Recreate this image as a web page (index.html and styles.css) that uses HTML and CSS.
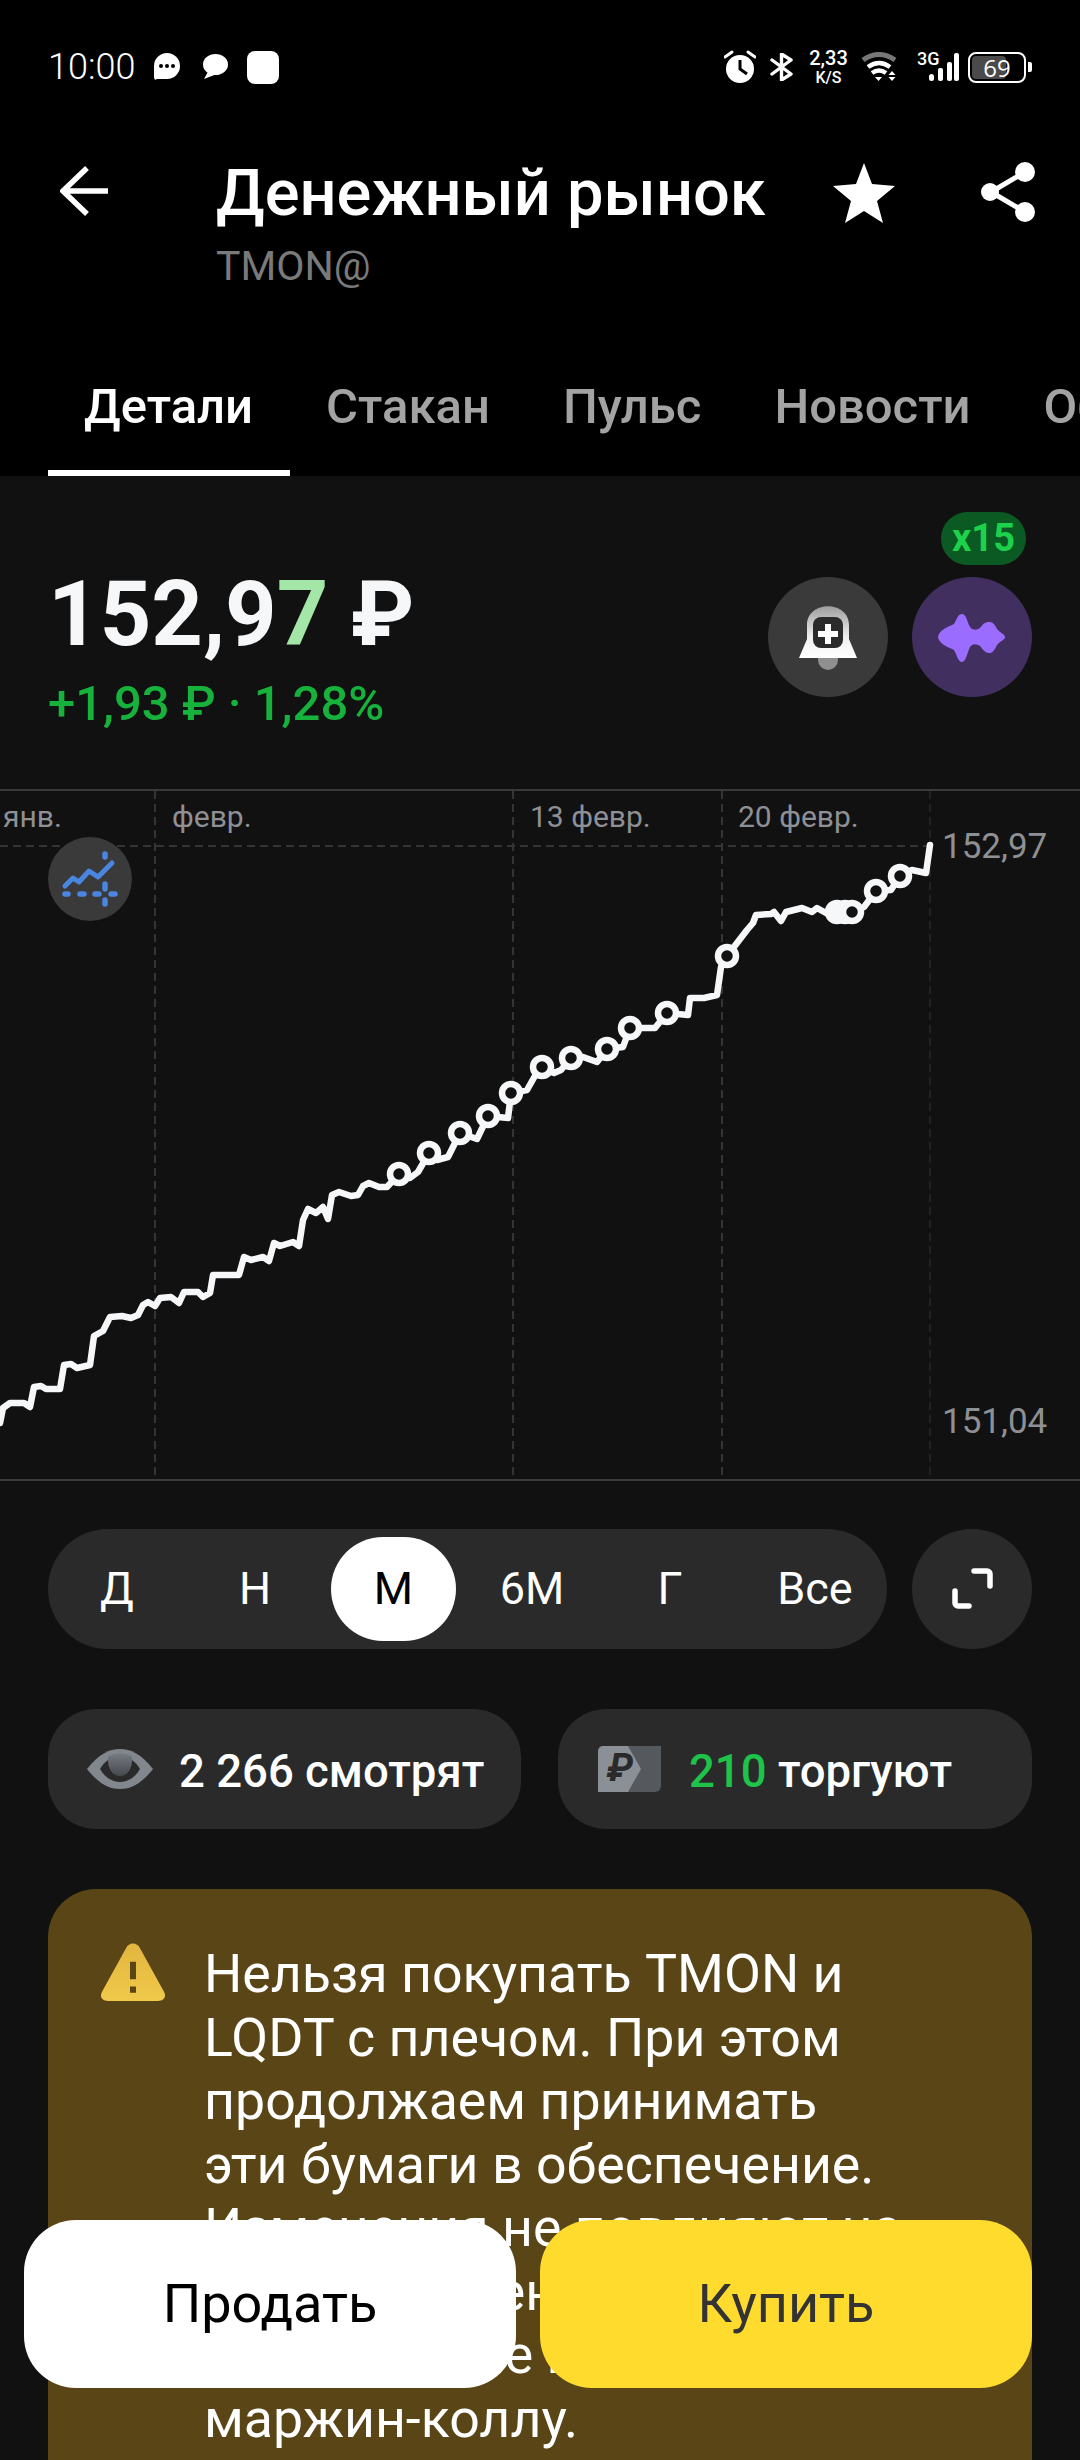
FILE: index.html
```html
<!DOCTYPE html>
<html lang="ru">

<head>
    <meta charset="UTF-8">
    <meta name="viewport" content="width=device-width, initial-scale=1.0">
    <title>Денежный рынок</title>
    <link rel="stylesheet" href="styles.css">
</head>

<body>
    <div class="page">
        <div class="top">
            <div class="status">
                <span class="status-time">10:00</span>
                <svg class="bubble-dots" viewBox="0 0 26 28"><path d="M13 0a13 13 0 0 1 0 26H3q-3 2-3-2V13A13 13 0 0 1 13 0z" fill="#fff"/><circle cx="7" cy="13" r="2"/><circle cx="13" cy="13" r="2"/><circle cx="19" cy="13" r="2"/></svg>
                <svg class="bubble-plain" viewBox="0 0 26 26"><ellipse cx="13.5" cy="10.5" rx="12.5" ry="10.5" fill="#fff"/><path d="M7 16L2 25L15 20z" fill="#fff"/></svg>
                <span class="status-square"></span>
                <div class="status-right">
                    <svg class="ic-alarm" viewBox="0 0 32 34"><circle cx="16" cy="19" r="14" fill="#fff"/><path d="M16 10v9l7 5" fill="none" stroke="#000" stroke-width="3"/><path d="M1 7l7-5M24 2l7 5" stroke="#fff" stroke-width="3" stroke-linecap="round"/></svg>
                    <svg class="ic-bt" viewBox="0 0 23 28"><path d="M2 7L21 21L11.5 27V1L21 7L2 21" fill="none" stroke="#fff" stroke-width="3.4" stroke-linejoin="round" stroke-linecap="round"/></svg>
                    <div class="speed"><span class="speed-val">2,33</span><span class="speed-unit">K/S</span></div>
                    <svg class="ic-wifi" viewBox="0 0 38 30"><path d="M2 8Q18 -3 34 8" fill="none" stroke="#777" stroke-width="5"/><path d="M7 15Q18 7 29 15" fill="none" stroke="#fff" stroke-width="4.5"/><path d="M11 21Q18 16 25 21" fill="none" stroke="#fff" stroke-width="4.5"/><path d="M14 25h7l-3.500 4z" fill="#fff"/><path d="M31 19l3.500 4h-7zM27.500 25h7l-3.500 4z" fill="#fff"/></svg>
                    <svg class="ic-signal" viewBox="0 0 42 30"><text class="signal-3g" x="0" y="13">3G</text><rect x="12" y="22" width="5" height="7" rx="2.500" fill="#fff"/><rect x="21" y="16" width="5" height="13" rx="2" fill="#fff"/><rect x="30" y="10" width="5" height="19" rx="2" fill="#fff"/><rect x="37" y="1" width="5" height="28" rx="2" fill="#fff"/></svg>
                    <div class="battery"><span class="battery-fill"></span><span class="battery-val">69</span></div>
                    <span class="battery-nub"></span>
                </div>
            </div>

            <div class="head">
                <svg class="ic-back" viewBox="0 0 48 50"><path d="M48 25H3M27 2L3 25L27 48" fill="none" stroke="#fff" stroke-width="5.500"/></svg>
                <div class="head-text">
                    <div class="title">Денежный рынок</div>
                    <div class="ticker">TMON@</div>
                </div>
                <svg class="ic-star" viewBox="0 0 62 60"><path d="M31 0L39 21L62 23L44 38L50 60L31 48L12 60L18 38L0 23L23 21z" fill="#fff"/></svg>
                <svg class="ic-share" viewBox="0 0 54 60"><path d="M44 10L10 30L44 50" fill="none" stroke="#fff" stroke-width="5"/><circle cx="9" cy="30" r="9" fill="#fff"/><circle cx="44" cy="10" r="10" fill="#fff"/><circle cx="44" cy="50" r="10" fill="#fff"/></svg>
            </div>

            <div class="tabs">
                <div class="tab active">Детали</div>
                <div class="tab">Стакан</div>
                <div class="tab">Пульс</div>
                <div class="tab">Новости</div>
                <div class="tab">Обзор</div>
            </div>
        </div>

        <div class="quote">
            <div>
                <div class="price">152,9<span class="price-last">7</span> ₽</div>
                <div class="change">+1,93 ₽ · 1,28%</div>
            </div>
            <div class="quote-actions">
                <div class="round-btn bell">
                    <svg viewBox="0 0 120 120">
                        <defs><linearGradient id="bellfill" x1="0" y1="0" x2="0" y2="1"><stop offset="0" stop-color="#9c9c9c"/><stop offset="0.6" stop-color="#f0f0f0"/><stop offset="1" stop-color="#fff"/></linearGradient></defs>
                        <path d="M50 80h20v3a10 10 0 0 1-20 0z" fill="#8f8f8f"/>
                        <path d="M31 81L39 62V48C39 23 81 23 81 48V62L89 81z" fill="url(#bellfill)"/>
                        <rect x="45" y="40" width="30" height="31" rx="8" fill="#2b2b2b"/>
                        <path d="M60 47V67M50 57H70" stroke="#fff" stroke-width="6"/>
                    </svg>
                </div>
                <div class="round-btn pulse">
                    <span class="badge">x15</span>
                    <svg viewBox="0 0 120 120"><path d="M26 60C27 53 36 50 42 47C45 42 46 37 50 37C54 37 55 44 58 50C61 54 66 53 69 50C72 45 75 45 78 45C81 45 83 48 85 52C88 56 93 57 93 60C93 63 88 64 85 68C83 72 81 76 78 76C75 76 72 75 69 70C66 67 61 66 58 70C55 76 54 85 50 85C46 85 45 78 42 73C36 70 27 67 26 60z" fill="#9a6cff"/></svg>
                </div>
            </div>
        </div>

        <div class="chart">
            <svg class="chart-svg" viewBox="0 791 1080 688">
                <g class="grid">
                    <path d="M0 846H930M155 791V1479M513 791V1479M722 791V1479"/>
                    <path class="grid-thin" d="M930 791V1479"/>
                </g>
                <text class="axis" x="3" y="827">янв.</text>
                <text class="axis" x="172" y="827">февр.</text>
                <text class="axis" x="530" y="827">13 февр.</text>
                <text class="axis" x="738" y="827">20 февр.</text>
                <text class="axis-price" x="942" y="858">152,97</text>
                <text class="axis-price" x="942" y="1433">151,04</text>
                <polyline class="line" points="0,1423 3,1408 10,1403 24,1403 30,1407 34,1387 41,1386 46,1389 60,1389 64,1365 71,1364 77,1368 90,1365 94,1336 103,1331 110,1317 122,1316 131,1318 138,1315 143,1305 148,1302 155,1306 160,1298 171,1297 179,1303 184,1292 198,1292 203,1297 210,1293 213,1275 239,1275 244,1257 251,1260 263,1257 269,1261 274,1243 280,1246 293,1242 299,1246 303,1220 308,1209 316,1213 323,1207 328,1219 332,1195 339,1192 351,1196 358,1195 363,1186 369,1183 379,1187 387,1187 399,1174 410,1178 418,1172 429,1153 437,1160 448,1157 460,1133 477,1139 488,1116 508,1118 511,1093 527,1090 540,1067 554,1073 561,1070 571,1058 583,1057 597,1062 607,1049 623,1047 630,1028 643,1028 655,1028 667,1013 688,1015 690,998 704,998 717,995 721,967 727,956 747,930 753,923 756,915 771,914 774,912 781,921 786,912 802,908 812,912 817,908 826,913 837,912 852,912 864,907 876,891 891,890 900,876 912,870 926,873 930,845"/>
                <g class="dots">
                    <circle cx="399" cy="1174" r="9"/>
                    <circle cx="429" cy="1153" r="9"/>
                    <circle cx="460" cy="1133" r="9"/>
                    <circle cx="488" cy="1116" r="9"/>
                    <circle cx="511" cy="1093" r="9"/>
                    <circle cx="542" cy="1067" r="9"/>
                    <circle cx="571" cy="1058" r="9"/>
                    <circle cx="607" cy="1049" r="9"/>
                    <circle cx="630" cy="1028" r="9"/>
                    <circle cx="667" cy="1013" r="9"/>
                    <circle cx="727" cy="956" r="9"/>
                    <circle class="dot-solid" cx="837" cy="912" r="9"/>
                    <circle class="dot-solid" cx="845" cy="912" r="9"/>
                    <circle cx="852" cy="912" r="9"/>
                    <circle cx="876" cy="891" r="9"/>
                    <circle cx="900" cy="876" r="9"/>
                </g>
            </svg>
            <div class="indicator-btn">
                <svg viewBox="0 0 84 84"><path d="M17 49L25 41L31 45L41 34L50 40L64 26" fill="none" stroke="#4a86e0" stroke-width="5" stroke-linecap="round" stroke-linejoin="round"/><path d="M57 17v3M57 47v5M57 63v4M17 57h3M32 57h4M47 57h4M63 57h4" stroke="#4a86e0" stroke-width="5.500" stroke-linecap="round"/></svg>
            </div>
        </div>

        <div class="range-row">
            <div class="range">
                <div class="range-item">Д</div>
                <div class="range-item">Н</div>
                <div class="range-item selected">М</div>
                <div class="range-item">6М</div>
                <div class="range-item">Г</div>
                <div class="range-item last">Все</div>
            </div>
            <div class="expand">
                <svg viewBox="0 0 120 120"><path d="M62 42H75a3 3 0 0 1 3 3V57M43 62V74a3 3 0 0 0 3 3H57" fill="none" stroke="#fff" stroke-width="5.500" stroke-linecap="round"/></svg>
            </div>
        </div>

        <div class="chips">
            <div class="chip">
                <svg class="ic-eye" viewBox="0 0 66 40">
                    <defs><linearGradient id="pupil" x1="0" y1="0" x2="0" y2="1"><stop offset="0" stop-color="#777c83"/><stop offset="1" stop-color="#45484d"/></linearGradient></defs>
                    <path d="M0 20C12 5 22 0 33 0C44 0 54 5 66 20C54 35 44 40 33 40C22 40 12 35 0 20z" fill="#82878e"/>
                    <path d="M13 20C18 11 26 7 33 7C40 7 48 11 53 20C48 29 40 33 33 33C26 33 18 29 13 20z" fill="#2a2a2b"/>
                    <path d="M21 8C26 3 40 3 45 8C46 20 40 27 33 27C26 27 20 20 21 8z" fill="url(#pupil)"/>
                </svg>
                <span class="chip-text">2 266 смотрят</span>
            </div>
            <div class="chip chip-trade">
                <svg class="ic-rub" viewBox="0 0 63 46">
                    <path d="M20 0H63V40a6 6 0 0 1-6 6H20z" fill="#55585d"/>
                    <path d="M5 0H30L43 23L30 46H0V5a5 5 0 0 1 5-5z" fill="#8b9097"/>
                    <text class="rub-mark" x="9" y="35">₽</text>
                </svg>
                <span class="chip-text"><span class="chip-green">210</span> торгуют</span>
            </div>
        </div>

        <div class="notice">
            <svg class="ic-warn" viewBox="0 0 66 58" preserveAspectRatio="none">
                <defs><linearGradient id="warn" x1="0" y1="0" x2="0" y2="1"><stop offset="0" stop-color="#e2b53f"/><stop offset="1" stop-color="#f0c94a"/></linearGradient></defs>
                <path d="M26 6C29 0 37 0 40 6L64 48C67 54 63 57 58 57H8C3 57 -1 54 2 48z" fill="url(#warn)"/>
                <path d="M33 19V36M33 43V49" stroke="#5a4516" stroke-width="6"/>
            </svg>
            <div class="notice-text">Нельзя покупать TMON и<br>LQDT с плечом. При этом<br>продолжаем принимать<br>эти бумаги в обеспечение.<br>Изменения не повлияют на<br>риск и уровень<br>маржи, но не приведут к<br>маржин-коллу.</div>
        </div>

        <div class="trade-bar">
            <div class="trade-btn sell">Продать</div>
            <div class="trade-btn buy">Купить</div>
        </div>
    </div>
</body>

</html>
```

FILE: styles.css
```css
* {
  box-sizing: border-box;
}

html,
body {
  margin: 0;
  padding: 0;
  background-color: #111112;
}

.page {
  position: relative;
  width: 1080px;
  height: 2460px;
  overflow: hidden;
  font-family: Roboto, "Noto Sans", sans-serif;
  color: #fff;
  background-color: #111112;
}

svg {
  display: block;
  flex-shrink: 0;
}

/* top black part */

.top {
  height: 476px;
  background-color: #000;
}

.status {
  display: flex;
  align-items: center;
  height: 134px;
  padding: 0 48px 0 48px;
}

.status-time {
  font-size: 36px;
  font-weight: 300;
  width: 106px;
}

.bubble-dots {
  width: 26px;
  height: 28px;
  margin-right: 22px;
}

.bubble-plain {
  width: 26px;
  height: 26px;
  margin-right: 19px;
}

.status-square {
  width: 32px;
  height: 33px;
  background-color: #fff;
  border-radius: 8px;
}

.status-right {
  display: flex;
  align-items: center;
  margin-left: auto;
}

.ic-alarm {
  width: 32px;
  height: 34px;
  margin-right: 14px;
}

.ic-bt {
  width: 23px;
  height: 28px;
  margin-right: 17px;
}

.speed {
  display: flex;
  flex-direction: column;
  align-items: center;
  width: 37px;
  margin-right: 14px;
  font-weight: 500;
}

.speed-val {
  font-size: 20px;
  line-height: 20px;
}

.speed-unit {
  font-size: 16px;
  line-height: 16px;
  margin-top: 2px;
}

.ic-wifi {
  width: 38px;
  height: 30px;
  margin-right: 18px;
}

.ic-signal {
  width: 42px;
  height: 30px;
  margin-right: 9px;
}

.signal-3g {
  font-size: 18px;
  font-weight: 500;
  fill: #fff;
}

.battery {
  position: relative;
  display: flex;
  align-items: center;
  justify-content: center;
  width: 58px;
  height: 31px;
  border: 2.5px solid #fff;
  border-radius: 8px;
  font-family: "Open Sans", sans-serif;
  font-size: 24px;
}

.battery-fill {
  position: absolute;
  left: 2px;
  top: 2px;
  bottom: 2px;
  width: 34px;
  background-color: #4a4a4a;
  border-radius: 4px;
}

.battery-val {
  position: relative;
}

.battery-nub {
  width: 4px;
  height: 10px;
  margin-left: 2px;
  background-color: #fff;
  border-radius: 0 2px 2px 0;
}

.head {
  display: flex;
  align-items: flex-start;
  height: 156px;
  padding-top: 21px;
}

.ic-back {
  width: 48px;
  height: 50px;
  margin: 11px 0 0 60px;
}

.head-text {
  margin-left: 108px;
  width: 617px;
}

.title {
  font-size: 65px;
  font-weight: 500;
  line-height: 76px;
  white-space: nowrap;
}

.ticker {
  margin-top: 11px;
  font-size: 41px;
  line-height: 48px;
  color: #7a7a7a;
}

.ic-star {
  width: 62px;
  height: 60px;
  margin-top: 8px;
}

.ic-share {
  width: 54px;
  height: 60px;
  margin: 7px 0 0 86px;
}

.tabs {
  display: flex;
  margin-top: 88px;
  padding-left: 48px;
}

.tab {
  flex-shrink: 0;
  padding: 0 37px 35px 36px;
  border-bottom: 6px solid transparent;
  font-size: 49px;
  font-weight: 500;
  line-height: 57px;
  color: #a3a3a3;
}

.tab.active {
  color: #fff;
  border-bottom-color: #fff;
}

/* price block */

.quote {
  display: flex;
  justify-content: space-between;
  height: 313px;
  padding: 86px 48px 0 48px;
}

.price {
  font-size: 90px;
  font-weight: 700;
  line-height: 105px;
  color: #f6f7f8;
}

.price-last {
  color: #a3e6a8;
}

.change {
  margin-top: 8px;
  font-size: 49px;
  font-weight: 500;
  line-height: 57px;
  color: #17b23c;
}

.quote-actions {
  display: flex;
  gap: 24px;
  margin-top: 15px;
}

.round-btn {
  position: relative;
  width: 120px;
  height: 120px;
  border-radius: 50%;
  background-color: #3a3a3b;
}

.round-btn.pulse {
  background-color: #41305f;
}

.badge {
  position: absolute;
  left: 29px;
  top: -65px;
  width: 85px;
  height: 53px;
  border-radius: 27px;
  background-color: #0b5a24;
  color: #1ed14b;
  font-size: 38px;
  font-weight: 700;
  line-height: 53px;
  text-align: center;
}

/* chart */

.chart {
  position: relative;
  height: 692px;
  border-top: 2px solid #3a3a3b;
  border-bottom: 2px solid #3a3a3b;
}

.chart-svg {
  width: 1080px;
  height: 688px;
}

.grid path {
  fill: none;
  stroke: #343435;
  stroke-width: 2;
  stroke-dasharray: 8 5;
}

.grid .grid-thin {
  stroke-width: 1;
}

.axis {
  font-size: 30px;
  fill: #8e9094;
}

.axis-price {
  font-size: 35px;
  fill: #8e9094;
}

.line {
  fill: none;
  stroke: #f6f7f8;
  stroke-width: 6.5;
  stroke-linejoin: round;
  stroke-linecap: round;
}

.dots circle {
  fill: #111112;
  stroke: #f6f7f8;
  stroke-width: 6.5;
}

.dots .dot-solid {
  fill: #f6f7f8;
}

.indicator-btn {
  position: absolute;
  left: 48px;
  top: 46px;
  width: 84px;
  height: 84px;
  border-radius: 50%;
  background-color: #3a3a3b;
}

/* period switch */

.range-row {
  display: flex;
  gap: 25px;
  margin: 48px 48px 0 48px;
}

.range {
  display: flex;
  align-items: center;
  flex: 1;
  height: 120px;
  border-radius: 60px;
  background-color: #2a2a2b;
}

.range-item {
  flex: none;
  width: 138px;
  height: 104px;
  border-radius: 52px;
  font-size: 45px;
  line-height: 104px;
  text-align: center;
}

.range-item.selected {
  width: 125px;
  margin: 0 7px;
  background-color: #fff;
  color: #000;
}

.range-item.last {
  margin-left: 7px;
}

.expand {
  width: 120px;
  height: 120px;
  border-radius: 50%;
  background-color: #2a2a2b;
}

.chips {
  display: flex;
  gap: 37px;
  margin: 60px 48px 0 48px;
}

.chip {
  display: flex;
  align-items: center;
  flex: 1;
  height: 120px;
  padding-left: 39px;
  border-radius: 48px;
  background-color: #2a2a2b;
}

.chip-trade {
  padding-left: 40px;
}

.ic-eye {
  width: 66px;
  height: 40px;
  margin-right: 26px;
}

.ic-rub {
  width: 63px;
  height: 46px;
  margin-right: 28px;
}

.rub-mark {
  font-size: 38px;
  font-weight: 700;
  font-style: italic;
  fill: #2a2a2b;
}

.chip-text {
  padding-top: 4px;
  font-size: 45.5px;
  font-weight: 500;
}

.chip-green {
  color: #1ec44a;
}

/* warning card */

.notice {
  display: flex;
  gap: 38px;
  height: 700px;
  margin: 60px 48px 0 48px;
  padding: 53px 40px 0 52px;
  border-radius: 48px;
  background-color: #5a4516;
}

.ic-warn {
  width: 66px;
  height: 60px;
}

.notice-text {
  font-size: 53.7px;
  line-height: 63.5px;
  white-space: nowrap;
}

/* buy and sell overlay */

.trade-bar {
  position: absolute;
  left: 24px;
  right: 48px;
  top: 2220px;
  display: flex;
  gap: 24px;
}

.trade-btn {
  flex: 1;
  height: 168px;
  border-radius: 52px;
  font-size: 54px;
  line-height: 168px;
  text-align: center;
}

.trade-btn.sell {
  background-color: #fff;
  color: #000;
}

.trade-btn.buy {
  background-color: #ffdb2d;
  color: #333;
}
```
